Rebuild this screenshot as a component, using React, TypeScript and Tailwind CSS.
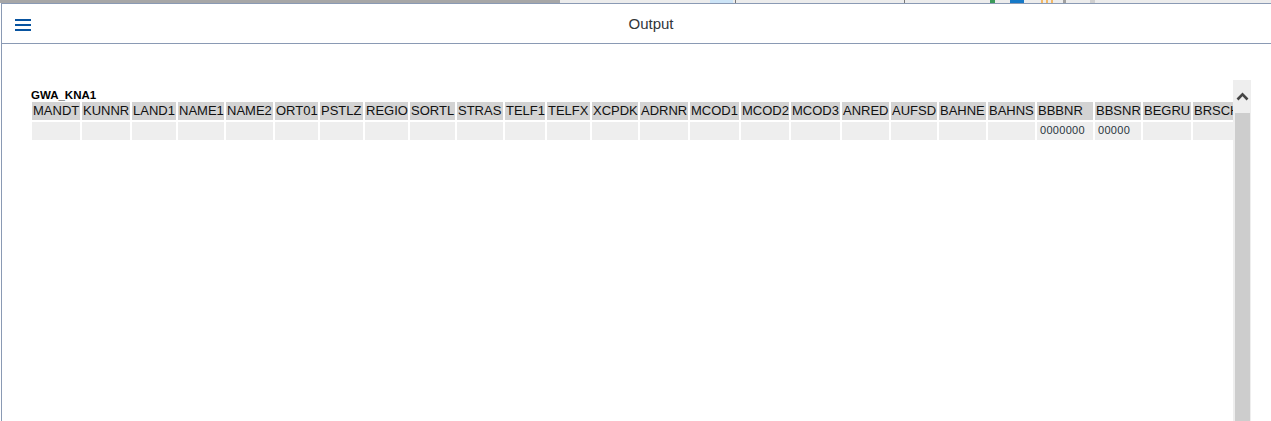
const columns: { name: string; width: number; value?: string }[] = [
  { name: 'MANDT', width: 48 },
  { name: 'KUNNR', width: 48 },
  { name: 'LAND1', width: 44 },
  { name: 'NAME1', width: 46 },
  { name: 'NAME2', width: 47 },
  { name: 'ORT01', width: 43 },
  { name: 'PSTLZ', width: 43 },
  { name: 'REGIO', width: 43 },
  { name: 'SORTL', width: 45 },
  { name: 'STRAS', width: 46 },
  { name: 'TELF1', width: 40 },
  { name: 'TELFX', width: 43 },
  { name: 'XCPDK', width: 46 },
  { name: 'ADRNR', width: 48 },
  { name: 'MCOD1', width: 49 },
  { name: 'MCOD2', width: 48 },
  { name: 'MCOD3', width: 49 },
  { name: 'ANRED', width: 47 },
  { name: 'AUFSD', width: 46 },
  { name: 'BAHNE', width: 47 },
  { name: 'BAHNS', width: 47 },
  { name: 'BBBNR', width: 56, value: '0000000' },
  { name: 'BBSNR', width: 46, value: '00000' },
  { name: 'BEGRU', width: 48 },
  { name: 'BRSCH', width: 48 },
];

function TopStrip() {
  // bits of the window behind the dialog
  return (
    <div className="flex h-[3px] shrink-0">
      <div className="w-[560px] bg-[#a7a7a7]" />
      <div className="w-[150px] bg-[#ececec]" />
      <div className="w-[23px] bg-[#cce4f7]" />
      <div className="w-[2px] bg-[#ececec]" />
      <div className="w-px bg-[#777]" />
      <div className="w-[168px] bg-[#ececec]" />
      <div className="w-px bg-[#777]" />
      <div className="w-[85px] bg-[#ececec]" />
      <div className="w-[5px] bg-[#3c9a5a]" />
      <div className="w-[15px] bg-[#ececec]" />
      <div className="w-[14px] bg-[#1679c7]" />
      <div className="w-[17px] bg-[#ececec]" />
      <div className="w-[2px] bg-[#f2b866]" />
      <div className="w-[3px] bg-[#ececec]" />
      <div className="w-[2px] bg-[#f2b866]" />
      <div className="w-[3px] bg-[#ececec]" />
      <div className="w-[2px] bg-[#f2b866]" />
      <div className="w-[10px] bg-[#ececec]" />
      <div className="w-[3px] bg-[#a0a0a0]" />
      <div className="w-[24px] bg-[#ececec]" />
      <div className="w-[5px] bg-[#cfcfcf]" />
      <div className="flex-1 bg-[#ececec]" />
    </div>
  );
}

function Scrollbar() {
  return (
    <div className="flex w-[18px] shrink-0 flex-col bg-[#eeeeee]">
      <div className="flex h-[33px] items-center justify-center pl-px">
        <svg width="13" height="9" viewBox="0 0 13 9">
          <path d="M1.5 7.5 L6.5 2.3 L11.5 7.5" fill="none" stroke="#454545" strokeWidth="2.6" />
        </svg>
      </div>
      <div className="ml-[2px] mr-px flex-1 bg-[#cdcdcd]" />
    </div>
  );
}

export default function App() {
  return (
    <div
      className="flex h-[421px] w-[1271px] flex-col overflow-hidden bg-white"
      style={{ fontFamily: '"Liberation Sans", Arial, sans-serif' }}
    >
      <TopStrip />
      <div className="ml-px flex min-h-0 flex-1 flex-col border-l border-t border-[#8a9ab4] bg-white">
        {/* header */}
        <div className="flex h-[40px] shrink-0 items-center border-b border-[#8a9ab4]">
          <button className="ml-[13px] mt-[3px] flex w-[16px] flex-col gap-[3px]">
            <span className="block h-[2px] w-[16px] bg-[#0854a0]" />
            <span className="block h-[2px] w-[16px] bg-[#0854a0]" />
            <span className="block h-[2px] w-[16px] bg-[#0854a0]" />
          </button>
          <div className="flex-1 pt-px text-center text-[15px] text-[#32363a]">Output</div>
        </div>

        {/* content */}
        <div className="flex min-h-0 flex-1 pl-[28px] pr-[20px] pt-[36px]">
          <div className="flex min-w-0 flex-1 flex-col overflow-hidden pt-[9px]">
            <div className="h-[13px] pl-px text-[11.5px] leading-[13px] font-bold text-black">GWA_KNA1</div>
            <div className="flex gap-[2px] pl-[2px]">
              {columns.map((c) => (
                <div
                  key={c.name}
                  className="h-[18px] shrink-0 overflow-hidden whitespace-nowrap bg-[#d3d3d3] pl-px text-[13px] leading-[18px] text-[#111]"
                  style={{ width: c.width }}
                >
                  {c.name}
                </div>
              ))}
            </div>
            <div className="mt-[2px] flex gap-[2px] pl-[2px]">
              {columns.map((c) => (
                <div
                  key={c.name}
                  className="h-[18px] shrink-0 overflow-hidden whitespace-nowrap bg-[#eeeeee] pl-[3px] text-[11px] leading-[17px] tracking-[0.3px] text-[#2a3540]"
                  style={{ width: c.width }}
                >
                  {c.value ?? ''}
                </div>
              ))}
            </div>
          </div>
          <Scrollbar />
        </div>
      </div>
    </div>
  );
}
